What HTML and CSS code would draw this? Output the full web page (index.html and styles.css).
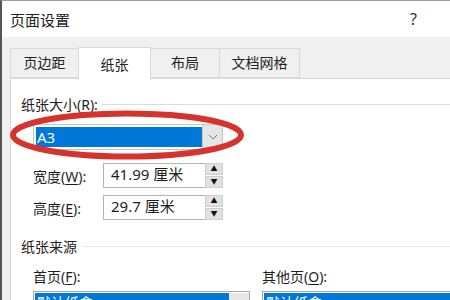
FILE: index.html
```html
<!DOCTYPE html>
<html lang="zh-CN">

<head>
  <meta charset="UTF-8">
  <meta name="viewport" content="width=device-width, initial-scale=1.0">
  <title>页面设置</title>
  <link rel="stylesheet" href="styles.css">
</head>

<body>
  <div class="win">
    <div class="titlebar">
      <span class="title">页面设置</span>
      <span class="help">?</span>
    </div>
    <div class="body">
      <div class="tabs">
        <div class="tab t1">页边距</div>
        <div class="tab t2 on">纸张</div>
        <div class="tab t3">布局</div>
        <div class="tab t4">文档网格</div>
      </div>
      <div class="panel">
        <div class="group">
          <span>纸张大小(<u>R</u>):</span>
          <i class="rule"></i>
        </div>
        <div class="combo-row">
          <div class="combo">
            <div class="combo-val">A3</div>
            <div class="combo-btn">
              <svg width="10" height="6" viewBox="0 0 10 6">
                <path d="M1 1 L5 5 L9 1" fill="none" stroke="#777" stroke-width="1" />
              </svg>
            </div>
          </div>
          <!-- 红圈标注 -->
          <svg class="mark" width="236" height="50" viewBox="0 0 236 50">
            <ellipse cx="118" cy="25" rx="114" ry="21.5" fill="none" stroke="#d7332d" stroke-width="6" />
          </svg>
        </div>
        <div class="field f1">
          <label>宽度(<u>W</u>):</label>
          <div class="spin">
            <div class="spin-val">41.99 厘米</div>
            <div class="spin-btns">
              <b>&#9650;</b>
              <b>&#9660;</b>
            </div>
          </div>
        </div>
        <div class="field f2">
          <label>高度(<u>E</u>):</label>
          <div class="spin">
            <div class="spin-val">29.7 厘米</div>
            <div class="spin-btns">
              <b>&#9650;</b>
              <b>&#9660;</b>
            </div>
          </div>
        </div>
        <div class="group g2">
          <span>纸张来源</span>
          <i class="rule"></i>
        </div>
        <div class="src">
          <div class="col c1">
            <label>首页(<u>F</u>):</label>
            <div class="list">
              <div class="list-sel">默认纸盒</div>
              <div class="list-bar"></div>
            </div>
          </div>
          <div class="col c2">
            <label>其他页(<u>O</u>):</label>
            <div class="list">
              <div class="list-sel">默认纸盒</div>
            </div>
          </div>
        </div>
      </div>
    </div>
  </div>
</body>

</html>
```

FILE: styles.css
```css
* {
  margin: 0;
  padding: 0;
  box-sizing: border-box;
}

html,
body {
  width: 450px;
  height: 300px;
  overflow: hidden;
  background: #fff;
}

body {
  font-family: "Noto Sans", "Noto Sans CJK SC", sans-serif;
  font-size: 14px;
  color: #1e1e1e;
}

u {
  text-decoration: underline;
  text-underline-offset: 2px;
}

.win {
  width: 450px;
  height: 300px;
  border-left: 2px solid #555;
  border-top: 1px solid #9a9a9a;
  display: flex;
  flex-direction: column;
  overflow: hidden;
}

/* 标题栏 */
.titlebar {
  flex-shrink: 0;
  height: 36px;
  padding-left: 8px;
  padding-right: 33px;
  display: flex;
  align-items: center;
  justify-content: space-between;
  background: #fff;
}

.title {
  font-size: 15px;
  color: #222;
}

.help {
  font-size: 16px;
  color: #333;
}

.body {
  flex: 1 0 auto;
  background: #f0f0f0;
  padding: 10px 0 0 8px;
  display: flex;
  flex-direction: column;
}

/* 选项卡 */
.tabs {
  flex-shrink: 0;
  display: flex;
  align-items: flex-end;
  height: 31px;
  position: relative;
  z-index: 1;
}

.tab {
  flex-shrink: 0;
  height: 30px;
  line-height: 28px;
  text-align: center;
  background: #f0f0f0;
  border: 1px solid #d9d9d9;
  border-right: none;
  color: #222;
}

.tab.t4 {
  border-right: 1px solid #d9d9d9;
}

.t1 {
  width: 68px;
}

.t2 {
  width: 73px;
}

.t3 {
  width: 68px;
}

.t4 {
  width: 81px;
}

.tab.on {
  height: 33px;
  line-height: 33px;
  margin-bottom: -2px;
  background: #fff;
  border-bottom: none;
  border-right: 1px solid #d9d9d9;
}

.tab.on + .tab {
  border-left: none;
}

.panel {
  flex: 1 0 auto;
  background: #fff;
  border-top: 1px solid #d9d9d9;
  border-left: 1px solid #d9d9d9;
  padding: 15px 0 0 10px;
}

/* 分组标题 */
.group {
  height: 20px;
  display: flex;
  align-items: center;
}

.group .rule {
  flex: 1;
  height: 1px;
  background: #dcdcdc;
  margin-left: 4px;
}

.group.g2 {
  margin-top: 16px;
}

.group.g2 .rule {
  margin-left: 6px;
  background: #e6e6e6;
}

/* 下拉框 */
.combo-row {
  margin-top: 10px;
  padding-left: 12px;
  position: relative;
}

.combo {
  width: 190px;
  height: 26px;
  border: 1px solid #c4c4c4;
  display: flex;
  padding: 2px 0 2px 2px;
}

.combo-val {
  flex: 1;
  background: #0078d7;
  color: #fff;
  font-size: 15px;
  line-height: 20px;
  padding-left: 1px;
}

.combo-btn {
  width: 20px;
  margin: -2px 0;
  background: #e5e5e5;
  border-left: 1px solid #ccc;
  display: flex;
  align-items: center;
  justify-content: center;
}

.mark {
  position: absolute;
  left: -12px;
  top: -14px;
}

/* 数值框 */
.field {
  display: flex;
  align-items: center;
  padding-left: 12px;
}

.field.f1 {
  margin-top: 13px;
}

.field.f2 {
  margin-top: 7px;
}

.field label {
  width: 70px;
}

.spin {
  display: flex;
  height: 25px;
}

.spin-val {
  width: 102px;
  border: 1px solid #b4b4b4;
  border-right: none;
  padding-left: 7px;
  line-height: 21px;
  font-size: 15px;
}

.spin-btns {
  width: 18px;
  display: flex;
  flex-direction: column;
  gap: 1px;
}

.spin-btns b {
  flex: 1;
  background: #e1e1e1;
  border: 1px solid #cfcfcf;
  font-size: 7px;
  line-height: 10px;
  text-align: center;
  color: #111;
}

/* 纸张来源 */
.src {
  display: flex;
  padding-left: 12px;
  margin-top: 11px;
  gap: 12px;
}

.col label {
  display: block;
  height: 20px;
  line-height: 20px;
}

.c1 {
  width: 217px;
}

.c2 {
  flex: 1;
}

.list {
  margin-top: 4px;
  height: 30px;
  border: 1px solid #a8a8a8;
  border-right: none;
  display: flex;
  padding: 1px 0 0 1px;
}

.c1 .list {
  border-right: 1px solid #a8a8a8;
}

.list-sel {
  flex: 1;
  background: #0078d7;
  color: #fff;
  line-height: 20px;
  padding-left: 2px;
}

.list-bar {
  width: 20px;
  background: #e8e8e8;
}
```
